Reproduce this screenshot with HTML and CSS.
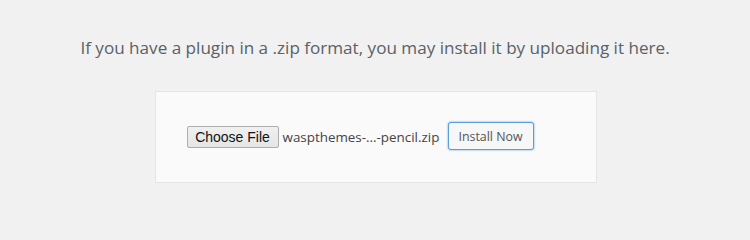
FILE: index.html
```html
<!DOCTYPE html>
<html>
<head>
<meta charset="utf-8">
<link rel="stylesheet" href="styles.css">
</head>
<body>
<div class="upload-plugin">
  <p class="install-help">If you have a plugin in a .zip format, you may install it by uploading it here.</p>
  <div class="form-row">
    <form class="upload-form">
      <div class="file-input">
        <span class="choose-btn">Choose File</span>
        <span class="file-name">waspthemes-...-pencil.zip</span>
      </div>
      <button type="button" class="install-btn">Install Now</button>
    </form>
  </div>
</div>
</body>
</html>
```
FILE: styles.css
```css
html, body {
  margin: 0;
  padding: 0;
  background: #f1f1f1;
}
body {
  width: 750px;
  height: 232px;
  overflow: hidden;
  font-family: "Open Sans", "Noto Sans", sans-serif;
}
.upload-plugin {
  display: flex;
  flex-direction: column;
  align-items: center;
}
.install-help {
  margin: 0;
  padding-top: 35px;
  height: 91px;
  box-sizing: border-box;
  font-size: 17.1px;
  line-height: 26px;
  color: #5a6168;
  text-align: center;
}
.form-row {
  display: flex;
  justify-content: center;
  width: 100%;
  padding-left: 1px;
  box-sizing: border-box;
}
.upload-form {
  display: flex;
  align-items: center;
  margin: 0;
  padding: 28px 62px 30px 31px;
  height: 92px;
  box-sizing: border-box;
  background: #fafafa;
  border: 1px solid #e5e5e5;
}
.file-input {
  display: flex;
  align-items: center;
  width: 261px;
  padding-top: 2px;
}
.choose-btn {
  display: inline-flex;
  align-items: center;
  justify-content: center;
  width: 92px;
  height: 22px;
  box-sizing: border-box;
  border: 1px solid #adadad;
  border-radius: 2px;
  background: linear-gradient(#f0f0f0, #e5e5e5);
  font-family: "Liberation Sans", Arial, sans-serif;
  font-size: 14px;
  color: #111;
}
.file-name {
  margin-left: 4px;
  font-size: 13.4px;
  color: #444;
  white-space: nowrap;
}
.install-btn {
  width: 86px;
  height: 28px;
  padding: 0;
  border: 1px solid #5b9dd9;
  border-radius: 3px;
  background: #f7f7f7;
  box-shadow: 0 0 2px rgba(30, 140, 190, 0.8);
  font-family: "Open Sans", "Noto Sans", sans-serif;
  font-size: 12.4px;
  color: #555;
}
```
